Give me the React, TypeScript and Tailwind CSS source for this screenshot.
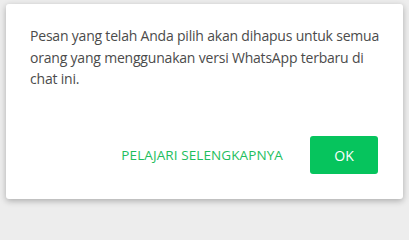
export default function App() {
  return (
    <div className="w-screen h-screen bg-[#ededed] pt-[4px] pl-[6px] font-['Open_Sans',sans-serif]">
      <div className="w-[397px] h-[195px] bg-white rounded-[3px] shadow-[0_2px_6px_rgba(0,0,0,0.28)] flex flex-col pl-6 pr-[25px] pt-[21px] pb-[25px]">
        <p className="text-[14px] leading-[21.5px] tracking-[-0.2px] text-[#4b4b4b] w-[350px]">
          Pesan yang telah Anda pilih akan dihapus untuk semua orang yang menggunakan versi WhatsApp terbaru di chat ini.
        </p>
        <div className="mt-auto flex items-center justify-end gap-[27px]">
          <button className="text-[13.5px] text-[#1ebe5d] tracking-[0.1px]">PELAJARI SELENGKAPNYA</button>
          <button className="w-[68px] h-[38px] rounded-[3px] bg-[#06c45d] text-white text-[14px]">OK</button>
        </div>
      </div>
    </div>
  );
}
